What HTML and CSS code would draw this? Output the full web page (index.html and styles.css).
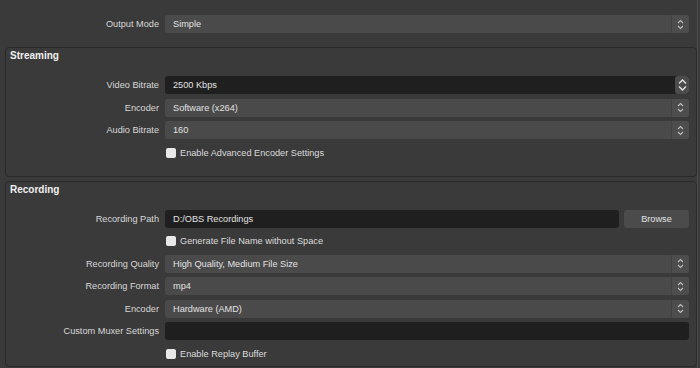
FILE: index.html
```html
<!DOCTYPE html>
<html>
<head>
    <title>Output Settings</title>
    <meta name="viewport" content="width=device-width, initial-scale=1">
    <link rel="stylesheet" href="styles.css">
</head>
<body>
    <div class="settingsPane">
        <div class="formRow topRow">
            <label class="fieldLabel">Output Mode</label>
            <div class="combo">
                <span class="value">Simple</span>
                <span class="comboArrows"><svg width="7" height="11" viewBox="0 0 7 11"><path d="M1 4 L3.5 1.5 L6 4 M1 7 L3.5 9.5 L6 7" fill="none" stroke="#bdbdbd" stroke-width="1.1"/></svg></span>
            </div>
        </div>

        <div class="groupBox">
            <div class="groupTitle">Streaming</div>
            <div class="groupForm">
                <div class="formRow">
                    <label class="fieldLabel">Video Bitrate</label>
                    <div class="spinBox">
                        <span class="value">2500 Kbps</span>
                        <span class="spinButtons"><svg width="9" height="14" viewBox="0 0 9 14"><path d="M1 5.5 L4.5 2 L8 5.5 M1 8.5 L4.5 12 L8 8.5" fill="none" stroke="#e6e6e6" stroke-width="1.3"/></svg></span>
                    </div>
                </div>
                <div class="formRow">
                    <label class="fieldLabel">Encoder</label>
                    <div class="combo">
                        <span class="value">Software (x264)</span>
                        <span class="comboArrows"><svg width="7" height="11" viewBox="0 0 7 11"><path d="M1 4 L3.5 1.5 L6 4 M1 7 L3.5 9.5 L6 7" fill="none" stroke="#bdbdbd" stroke-width="1.1"/></svg></span>
                    </div>
                </div>
                <div class="formRow">
                    <label class="fieldLabel">Audio Bitrate</label>
                    <div class="combo">
                        <span class="value">160</span>
                        <span class="comboArrows"><svg width="7" height="11" viewBox="0 0 7 11"><path d="M1 4 L3.5 1.5 L6 4 M1 7 L3.5 9.5 L6 7" fill="none" stroke="#bdbdbd" stroke-width="1.1"/></svg></span>
                    </div>
                </div>
                <div class="formRow">
                    <span></span>
                    <label class="checkRow"><span class="checkBox"></span>Enable Advanced Encoder Settings</label>
                </div>
            </div>
        </div>

        <div class="groupBox">
            <div class="groupTitle">Recording</div>
            <div class="groupForm">
                <div class="formRow">
                    <label class="fieldLabel">Recording Path</label>
                    <div class="pathField">
                        <div class="lineEdit"><span class="value">D:/OBS Recordings</span></div>
                        <button class="browseButton">Browse</button>
                    </div>
                </div>
                <div class="formRow">
                    <span></span>
                    <label class="checkRow"><span class="checkBox"></span>Generate File Name without Space</label>
                </div>
                <div class="formRow">
                    <label class="fieldLabel">Recording Quality</label>
                    <div class="combo">
                        <span class="value">High Quality, Medium File Size</span>
                        <span class="comboArrows"><svg width="7" height="11" viewBox="0 0 7 11"><path d="M1 4 L3.5 1.5 L6 4 M1 7 L3.5 9.5 L6 7" fill="none" stroke="#bdbdbd" stroke-width="1.1"/></svg></span>
                    </div>
                </div>
                <div class="formRow">
                    <label class="fieldLabel">Recording Format</label>
                    <div class="combo">
                        <span class="value">mp4</span>
                        <span class="comboArrows"><svg width="7" height="11" viewBox="0 0 7 11"><path d="M1 4 L3.5 1.5 L6 4 M1 7 L3.5 9.5 L6 7" fill="none" stroke="#bdbdbd" stroke-width="1.1"/></svg></span>
                    </div>
                </div>
                <div class="formRow">
                    <label class="fieldLabel">Encoder</label>
                    <div class="combo">
                        <span class="value">Hardware (AMD)</span>
                        <span class="comboArrows"><svg width="7" height="11" viewBox="0 0 7 11"><path d="M1 4 L3.5 1.5 L6 4 M1 7 L3.5 9.5 L6 7" fill="none" stroke="#bdbdbd" stroke-width="1.1"/></svg></span>
                    </div>
                </div>
                <div class="formRow">
                    <label class="fieldLabel">Custom Muxer Settings</label>
                    <div class="lineEdit"></div>
                </div>
                <div class="formRow">
                    <span></span>
                    <label class="checkRow"><span class="checkBox"></span>Enable Replay Buffer</label>
                </div>
            </div>
        </div>
    </div>
</body>
</html>
```

FILE: styles.css
```css
body {
    margin: 0;
    background: #3a3a3a;
    color: #dcdcdc;
    font-family: "Liberation Sans", Arial, sans-serif;
    font-size: 9.2px;
    overflow: hidden;
}
.settingsPane {
    width: 698px;
    height: 368px;
    padding-top: 15px;
    box-sizing: border-box;
    border-right: 1px solid #4e4e4e;
}
.formRow {
    display: grid;
    grid-template-columns: 153px 1fr;
    column-gap: 6px;
    height: 18px;
    align-items: center;
}
.topRow {
    padding-left: 6px;
    padding-right: 8px;
}
.fieldLabel {
    text-align: right;
    color: #d8d8d8;
}
.combo, .spinBox, .lineEdit {
    display: flex;
    align-items: center;
    height: 18px;
    border-radius: 3px;
    overflow: hidden;
}
.combo {
    background: #4a4a4a;
}
.spinBox, .lineEdit {
    background: #1f1f1f;
}
.value {
    flex: 1;
    padding-left: 8px;
    color: #e2e2e2;
    white-space: nowrap;
}
.comboArrows {
    display: flex;
    align-items: center;
    justify-content: center;
    width: 17px;
    height: 18px;
    background: #4d4d4d;
    border-left: 1px solid #424242;
}
.spinButtons {
    display: flex;
    align-items: center;
    justify-content: center;
    width: 14px;
    height: 18px;
    background: #4c4c4c;
    border-radius: 3px;
}
.groupBox {
    margin: 14px 0 0 5px;
    border: 1px solid #2a2a2a;
    border-radius: 4px;
    padding-bottom: 14px;
}
.groupBox + .groupBox {
    margin-top: 4px;
    padding-bottom: 3px;
}
.groupTitle {
    height: 18px;
    line-height: 16px;
    padding-left: 4px;
    font-size: 10px;
    font-weight: bold;
    color: #f0f0f0;
}
.groupForm {
    display: flex;
    flex-direction: column;
    gap: 4.5px;
    margin-top: 10px;
    padding-right: 7px;
}
.checkRow {
    display: flex;
    align-items: center;
    gap: 4px;
    padding-left: 1px;
    color: #dcdcdc;
}
.checkBox {
    width: 10px;
    height: 10px;
    border-radius: 2px;
    background: #e8e8e8;
}
.pathField {
    display: flex;
    gap: 5px;
}
.pathField .lineEdit {
    flex: 1;
}
.browseButton {
    width: 65px;
    height: 18px;
    border: none;
    border-radius: 3px;
    background: #4b4b4b;
    color: #e2e2e2;
    font-family: "Liberation Sans", Arial, sans-serif;
    font-size: 9.2px;
    padding: 0;
}
```
